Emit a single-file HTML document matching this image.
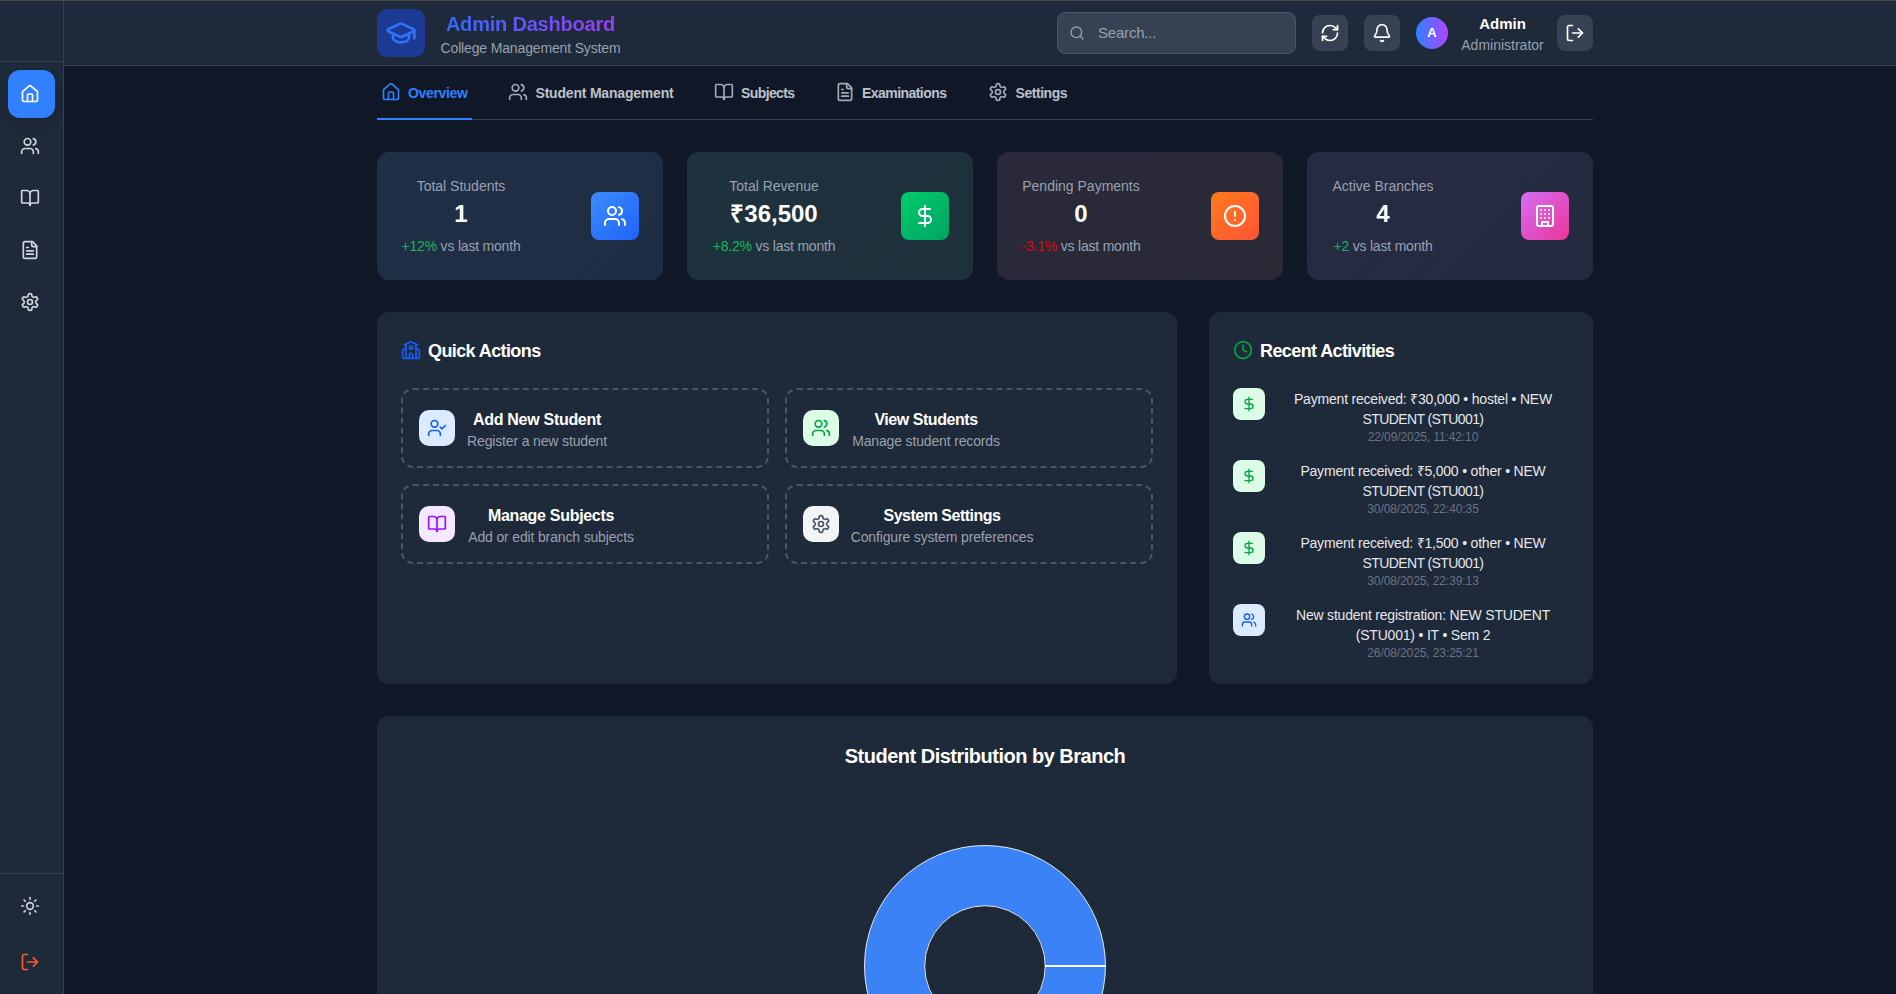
<!DOCTYPE html>
<html><head><meta charset="utf-8">
<style>
*{box-sizing:border-box;margin:0;padding:0}
html,body{width:1896px;height:994px;overflow:hidden;background:#101828;font-family:"Liberation Sans",sans-serif;color:#fff}
.abs{position:absolute}
svg{display:block;fill:none;stroke:currentColor;stroke-width:2;stroke-linecap:round;stroke-linejoin:round}
#topline{left:0;top:0;width:1896px;height:1px;background:#4a4b48;z-index:50}
#sidebar{left:0;top:0;width:64px;height:994px;background:#1e2939;border-right:1px solid #364153}
#sbtop{left:0;top:0;width:63px;height:62px;border-bottom:1px solid #364153}
#sbbot{left:0;top:873px;width:63px;height:1px;background:#364153}
.sbi{left:20px;color:#d1d5dc}
#sbactive{left:8px;top:70px;width:47px;height:48px;border-radius:12px;background:#3080ff;box-shadow:0 6px 10px rgba(0,0,0,.12)}
#header{left:64px;top:0;width:1832px;height:66px;background:#1e2939;border-bottom:1px solid #364153}
#logo{left:377px;top:9px;width:48px;height:48px;border-radius:10px;background:#1c3a93}
#title{left:441px;top:10px;width:179px;text-align:center}
#title .t1{font-size:20px;font-weight:700;line-height:28px;background:linear-gradient(90deg,#2f6bff,#9d3cf5);-webkit-background-clip:text;background-clip:text;color:transparent;letter-spacing:-0.2px}
#title .t2{font-size:14px;line-height:20px;color:#99a1af;letter-spacing:-0.15px;white-space:nowrap;margin-left:-3px;margin-right:-3px}
#search{left:1057px;top:12px;width:239px;height:42px;border-radius:8px;background:#364153;border:1px solid #4a5565}
#search .ph{position:absolute;left:40px;top:11px;font-size:15px;line-height:18px;color:#99a1af;letter-spacing:-0.2px}
.hbtn{top:15px;width:36px;height:36px;border-radius:8px;background:#364153;color:#fff}
.hbtn svg{position:absolute;left:8px;top:8px}
#avatar{left:1416px;top:17px;width:32px;height:32px;border-radius:50%;background:linear-gradient(90deg,#3080ff,#ad46ff);font-size:13px;font-weight:700;text-align:center;line-height:32px}
#uname{left:1455px;top:12px;width:95px;text-align:center}
#uname .n{font-size:15px;font-weight:700;line-height:20px;margin-top:1.5px}
#uname .r{font-size:14px;line-height:20px;color:#99a1af;margin-top:1.5px}
#tabs{left:377px;top:66px;width:1216px;height:54px;border-bottom:1px solid #364153}
.tab{top:15px;height:20px;font-size:14px;font-weight:700;line-height:20px;color:#bcc1ca;white-space:nowrap}
.tab span{top:1.5px!important}
.tab svg{position:absolute;left:0;top:1px;color:#a3a9b5}
.tab:first-child svg{color:#3080ff}
.tab span{position:absolute;top:0}
#ul{left:0;top:52px;width:95px;height:2px;background:#3080ff}
.card{top:152px;width:286px;height:128px;border-radius:12px}
.card .lbl{position:absolute;text-align:center;white-space:nowrap}
.card .l1{font-size:14px;line-height:20px;color:#99a1af}
.card .l2{font-size:24px;font-weight:700;line-height:32px;color:#fff}
.card .l3{font-size:14px;line-height:20px;color:#99a1af;letter-spacing:-0.2px}
.card .ic{position:absolute;left:214px;top:40px;width:48px;height:48px;border-radius:8px;color:#fff}
.card .ic svg{position:absolute;left:12px;top:12px}
.panel{background:#1e2939;border-radius:12px}
.ptitle{font-size:18px;font-weight:700;line-height:28px;letter-spacing:-0.6px;white-space:nowrap}
.qa{width:368px;height:80px;border:2px dashed #4a5565;border-radius:12px}
.qa .qi{position:absolute;left:16px;top:20px;width:36px;height:36px;border-radius:10px}
.qa .qi svg{position:absolute;left:8px;top:8px}
.qa .qt{position:absolute;top:19px;text-align:center;white-space:nowrap}
.qa .a{font-size:16px;font-weight:700;line-height:22px;letter-spacing:-0.3px}
.qa .b{font-size:14px;line-height:20px;color:#99a1af;letter-spacing:-0.15px}
.act{left:24px;width:336px;height:72px}
.act .ai{position:absolute;left:0;top:0;width:32px;height:32px;border-radius:8px}
.act .ai svg{position:absolute;left:8px;top:8px}
.act .at{position:absolute;left:44px;width:292px;top:1px;text-align:center;white-space:nowrap}
.act .m{font-size:14px;line-height:20px;color:#e5e7eb;letter-spacing:-0.2px}
.act .d{font-size:12px;line-height:16px;color:#6a7282;letter-spacing:-0.1px}
</style></head><body>
<div id="topline" class="abs"></div>
<!-- SIDEBAR -->
<div id="sidebar" class="abs"></div>
<div id="sbtop" class="abs"></div>
<div id="sbbot" class="abs"></div>
<div id="sbactive" class="abs"><svg class="abs" style="left:11.5px;top:13.5px" width="20" height="20" viewBox="0 0 24 24" stroke="#fff"><path d="M15 21v-8a1 1 0 0 0-1-1h-4a1 1 0 0 0-1 1v8"/><path d="M3 10a2 2 0 0 1 .709-1.528l7-5.999a2 2 0 0 1 2.582 0l7 5.999A2 2 0 0 1 21 10v9a2 2 0 0 1-2 2H5a2 2 0 0 1-2-2z"/></svg></div>
<svg class="abs sbi" style="top:136px" width="20" height="20" viewBox="0 0 24 24"><path d="M16 21v-2a4 4 0 0 0-4-4H6a4 4 0 0 0-4 4v2"/><path d="M16 3.128a4 4 0 0 1 0 7.744"/><path d="M22 21v-2a4 4 0 0 0-3-3.87"/><circle cx="9" cy="7" r="4"/></svg>
<svg class="abs sbi" style="top:188px" width="20" height="20" viewBox="0 0 24 24"><path d="M12 7v14"/><path d="M3 18a1 1 0 0 1-1-1V4a1 1 0 0 1 1-1h5a4 4 0 0 1 4 4 4 4 0 0 1 4-4h5a1 1 0 0 1 1 1v13a1 1 0 0 1-1 1h-6a3 3 0 0 0-3 3 3 3 0 0 0-3-3z"/></svg>
<svg class="abs sbi" style="top:240px" width="20" height="20" viewBox="0 0 24 24"><path d="M15 2H6a2 2 0 0 0-2 2v16a2 2 0 0 0 2 2h12a2 2 0 0 0 2-2V7Z"/><path d="M14 2v4a2 2 0 0 0 2 2h4"/><path d="M10 9H8"/><path d="M16 13H8"/><path d="M16 17H8"/></svg>
<svg class="abs sbi" style="top:292px" width="20" height="20" viewBox="0 0 24 24"><path d="M12.22 2h-.44a2 2 0 0 0-2 2v.18a2 2 0 0 1-1 1.73l-.43.25a2 2 0 0 1-2 0l-.15-.08a2 2 0 0 0-2.73.73l-.22.38a2 2 0 0 0 .73 2.73l.15.1a2 2 0 0 1 1 1.72v.51a2 2 0 0 1-1 1.74l-.15.09a2 2 0 0 0-.73 2.730l.22.38a2 2 0 0 0 2.73.73l.15-.08a2 2 0 0 1 2 0l.43.25a2 2 0 0 1 1 1.73V20a2 2 0 0 0 2 2h.44a2 2 0 0 0 2-2v-.18a2 2 0 0 1 1-1.73l.43-.25a2 2 0 0 1 2 0l.15.08a2 2 0 0 0 2.73-.73l.22-.39a2 2 0 0 0-.73-2.73l-.15-.08a2 2 0 0 1-1-1.74v-.5a2 2 0 0 1 1-1.74l.15-.09a2 2 0 0 0 .73-2.73l-.22-.38a2 2 0 0 0-2.73-.73l-.15.08a2 2 0 0 1-2 0l-.43-.25a2 2 0 0 1-1-1.73V4a2 2 0 0 0-2-2z"/><circle cx="12" cy="12" r="3"/></svg>
<svg class="abs sbi" style="top:896px" width="20" height="20" viewBox="0 0 24 24"><circle cx="12" cy="12" r="4"/><path d="M12 2v2"/><path d="M12 20v2"/><path d="m4.93 4.93 1.41 1.41"/><path d="m17.66 17.66 1.41 1.41"/><path d="M2 12h2"/><path d="M20 12h2"/><path d="m6.34 17.66-1.41 1.41"/><path d="m19.07 4.93-1.41 1.41"/></svg>
<svg class="abs sbi" style="top:952px;color:#ff5a2e" width="20" height="20" viewBox="0 0 24 24"><path d="M9 21H5a2 2 0 0 1-2-2V5a2 2 0 0 1 2-2h4"/><path d="m16 17 5-5-5-5"/><path d="M21 12H9"/></svg>

<!-- HEADER -->
<div id="header" class="abs"></div>
<div id="logo" class="abs"><svg class="abs" style="left:8px;top:8px;color:#2f74ff" width="32" height="32" viewBox="0 0 24 24"><path d="M21.42 10.922a1 1 0 0 0-.019-1.838L12.83 5.18a2 2 0 0 0-1.66 0L2.6 9.08a1 1 0 0 0 0 1.832l8.57 3.908a2 2 0 0 0 1.66 0z"/><path d="M22 10v6"/><path d="M6 12.5V16a6 3 0 0 0 12 0v-3.5"/></svg></div>
<div id="title" class="abs"><div class="t1">Admin Dashboard</div><div class="t2">College Management System</div></div>
<div id="search" class="abs"><svg class="abs" style="left:11px;top:12px;color:#99a1af" width="16" height="16" viewBox="0 0 24 24"><circle cx="11" cy="11" r="8"/><path d="m21 21-4.3-4.3"/></svg><div class="ph">Search...</div></div>
<div class="abs hbtn" style="left:1312px"><svg width="20" height="20" viewBox="0 0 24 24"><path d="M3 12a9 9 0 0 1 9-9 9.75 9.75 0 0 1 6.74 2.74L21 8"/><path d="M21 3v5h-5"/><path d="M21 12a9 9 0 0 1-9 9 9.75 9.75 0 0 1-6.74-2.74L3 16"/><path d="M8 16H3v5"/></svg></div>
<div class="abs hbtn" style="left:1364px"><svg width="20" height="20" viewBox="0 0 24 24"><path d="M10.268 21a2 2 0 0 0 3.464 0"/><path d="M3.262 15.326A1 1 0 0 0 4 17h16a1 1 0 0 0 .74-1.673C19.41 13.956 18 12.499 18 8A6 6 0 0 0 6 8c0 4.499-1.411 5.956-2.738 7.326"/></svg></div>
<div id="avatar" class="abs">A</div>
<div id="uname" class="abs"><div class="n">Admin</div><div class="r">Administrator</div></div>
<div class="abs hbtn" style="left:1557px"><svg width="20" height="20" viewBox="0 0 24 24"><path d="M9 21H5a2 2 0 0 1-2-2V5a2 2 0 0 1 2-2h4"/><path d="m16 17 5-5-5-5"/><path d="M21 12H9"/></svg></div>

<!-- TABS -->
<div id="tabs" class="abs">
  <div class="abs tab" style="left:4px;width:91px;color:#3080ff"><svg width="20" height="20" viewBox="0 0 24 24"><path d="M15 21v-8a1 1 0 0 0-1-1h-4a1 1 0 0 0-1 1v8"/><path d="M3 10a2 2 0 0 1 .709-1.528l7-5.999a2 2 0 0 1 2.582 0l7 5.999A2 2 0 0 1 21 10v9a2 2 0 0 1-2 2H5a2 2 0 0 1-2-2z"/></svg><span style="left:27px;letter-spacing:-0.35px">Overview</span></div>
  <div class="abs tab" style="left:130.5px;width:170px"><svg width="20" height="20" viewBox="0 0 24 24"><path d="M16 21v-2a4 4 0 0 0-4-4H6a4 4 0 0 0-4 4v2"/><path d="M16 3.128a4 4 0 0 1 0 7.744"/><path d="M22 21v-2a4 4 0 0 0-3-3.87"/><circle cx="9" cy="7" r="4"/></svg><span style="left:28px;letter-spacing:-0.2px">Student Management</span></div>
  <div class="abs tab" style="left:336.5px;width:90px"><svg width="20" height="20" viewBox="0 0 24 24"><path d="M12 7v14"/><path d="M3 18a1 1 0 0 1-1-1V4a1 1 0 0 1 1-1h5a4 4 0 0 1 4 4 4 4 0 0 1 4-4h5a1 1 0 0 1 1 1v13a1 1 0 0 1-1 1h-6a3 3 0 0 0-3 3 3 3 0 0 0-3-3z"/></svg><span style="left:27.5px;letter-spacing:-0.6px">Subjects</span></div>
  <div class="abs tab" style="left:457.5px;width:120px"><svg width="20" height="20" viewBox="0 0 24 24"><path d="M15 2H6a2 2 0 0 0-2 2v16a2 2 0 0 0 2 2h12a2 2 0 0 0 2-2V7Z"/><path d="M14 2v4a2 2 0 0 0 2 2h4"/><path d="M10 9H8"/><path d="M16 13H8"/><path d="M16 17H8"/></svg><span style="left:27.5px;letter-spacing:-0.55px">Examinations</span></div>
  <div class="abs tab" style="left:610.5px;width:90px"><svg width="20" height="20" viewBox="0 0 24 24"><path d="M12.22 2h-.44a2 2 0 0 0-2 2v.18a2 2 0 0 1-1 1.73l-.43.25a2 2 0 0 1-2 0l-.15-.08a2 2 0 0 0-2.73.73l-.22.38a2 2 0 0 0 .73 2.73l.15.1a2 2 0 0 1 1 1.72v.51a2 2 0 0 1-1 1.74l-.15.09a2 2 0 0 0-.73 2.73l.22.38a2 2 0 0 0 2.73.73l.15-.08a2 2 0 0 1 2 0l.43.25a2 2 0 0 1 1 1.73V20a2 2 0 0 0 2 2h.44a2 2 0 0 0 2-2v-.18a2 2 0 0 1 1-1.73l.43-.25a2 2 0 0 1 2 0l.15.08a2 2 0 0 0 2.73-.73l.22-.39a2 2 0 0 0-.73-2.73l-.15-.08a2 2 0 0 1-1-1.74v-.5a2 2 0 0 1 1-1.74l.15-.09a2 2 0 0 0 .73-2.73l-.22-.38a2 2 0 0 0-2.73-.73l-.15.08a2 2 0 0 1-2 0l-.43-.25a2 2 0 0 1-1-1.73V4a2 2 0 0 0-2-2z"/><circle cx="12" cy="12" r="3"/></svg><span style="left:28px;letter-spacing:-0.45px">Settings</span></div>
  <div id="ul" class="abs"></div>
</div>

<!-- STAT CARDS -->
<div class="abs card" style="left:377px;background:linear-gradient(135deg,#202e46,#1f2d44)">
  <div class="lbl l1" style="left:-16px;width:200px;top:24px">Total Students</div>
  <div class="lbl l2" style="left:-16px;width:200px;top:46px">1</div>
  <div class="lbl l3" style="left:-16px;width:200px;top:84px"><span style="color:#13b957">+12%</span> vs last month</div>
  <div class="ic" style="background:linear-gradient(135deg,#3c8cff,#1f63fb)"><svg width="24" height="24" viewBox="0 0 24 24"><path d="M16 21v-2a4 4 0 0 0-4-4H6a4 4 0 0 0-4 4v2"/><path d="M16 3.128a4 4 0 0 1 0 7.744"/><path d="M22 21v-2a4 4 0 0 0-3-3.87"/><circle cx="9" cy="7" r="4"/></svg></div>
</div>
<div class="abs card" style="left:687px;background:linear-gradient(135deg,#1e333e,#1e303a)">
  <div class="lbl l1" style="left:-13px;width:200px;top:24px">Total Revenue</div>
  <div class="lbl l2" style="left:-13px;width:200px;top:46px">₹36,500</div>
  <div class="lbl l3" style="left:-13px;width:200px;top:84px"><span style="color:#13b957">+8.2%</span> vs last month</div>
  <div class="ic" style="background:linear-gradient(135deg,#00cc6c,#00a462)"><svg width="24" height="24" viewBox="0 0 24 24"><path d="M12 2v20"/><path d="M17 5H9.5a3.5 3.5 0 0 0 0 7h5a3.5 3.5 0 0 1 0 7H6"/></svg></div>
</div>
<div class="abs card" style="left:997px;background:linear-gradient(135deg,#29293a,#292a36)">
  <div class="lbl l1" style="left:-16px;width:200px;top:24px">Pending Payments</div>
  <div class="lbl l2" style="left:-16px;width:200px;top:46px">0</div>
  <div class="lbl l3" style="left:-16px;width:200px;top:84px"><span style="color:#e7000b">-3.1%</span> vs last month</div>
  <div class="ic" style="background:linear-gradient(135deg,#ff7a1c,#fd5436)"><svg width="24" height="24" viewBox="0 0 24 24"><circle cx="12" cy="12" r="10"/><path d="M12 8v4"/><path d="M12 16h.01"/></svg></div>
</div>
<div class="abs card" style="left:1307px;background:linear-gradient(135deg,#262b44,#242a3f)">
  <div class="lbl l1" style="left:-24px;width:200px;top:24px">Active Branches</div>
  <div class="lbl l2" style="left:-24px;width:200px;top:46px">4</div>
  <div class="lbl l3" style="left:-24px;width:200px;top:84px"><span style="color:#13b957">+2</span> vs last month</div>
  <div class="ic" style="background:linear-gradient(135deg,#d56ef8,#ea3597)"><svg width="24" height="24" viewBox="0 0 24 24"><rect width="16" height="20" x="4" y="2" rx="2" ry="2"/><path d="M9 22v-4h6v4"/><path d="M8 6h.01"/><path d="M16 6h.01"/><path d="M12 6h.01"/><path d="M12 10h.01"/><path d="M12 14h.01"/><path d="M16 10h.01"/><path d="M16 14h.01"/><path d="M8 10h.01"/><path d="M8 14h.01"/></svg></div>
</div>


<!-- PANELS -->
<div class="abs panel" style="left:377px;top:312px;width:800px;height:372px">
  <svg class="abs" style="left:24px;top:28px;color:#155dfc" width="20" height="20" viewBox="0 0 24 24"><path d="M14 22v-4a2 2 0 1 0-4 0v4"/><path d="m18 10 3.447 1.724a1 1 0 0 1 .553.894V20a2 2 0 0 1-2 2H4a2 2 0 0 1-2-2v-7.382a1 1 0 0 1 .553-.894L6 10"/><path d="M18 5v17"/><path d="m4 6 7.106-3.553a2 2 0 0 1 1.788 0L20 6"/><path d="M6 5v17"/><circle cx="12" cy="9" r="2"/></svg>
  <div class="abs ptitle" style="left:51px;top:25px">Quick Actions</div>
  <div class="abs qa" style="left:24px;top:76px">
    <div class="qi" style="background:#dbeafe;color:#155dfc"><svg width="20" height="20" viewBox="0 0 24 24"><path d="M16 21v-2a4 4 0 0 0-4-4H6a4 4 0 0 0-4 4v2"/><circle cx="9" cy="7" r="4"/><path d="m16 11 2 2 4-4"/></svg></div>
    <div class="qt" style="left:34px;width:200px"><div class="a">Add New Student</div><div class="b">Register a new student</div></div>
  </div>
  <div class="abs qa" style="left:408px;top:76px">
    <div class="qi" style="background:#dcfce7;color:#00a63e"><svg width="20" height="20" viewBox="0 0 24 24"><path d="M16 21v-2a4 4 0 0 0-4-4H6a4 4 0 0 0-4 4v2"/><path d="M16 3.128a4 4 0 0 1 0 7.744"/><path d="M22 21v-2a4 4 0 0 0-3-3.87"/><circle cx="9" cy="7" r="4"/></svg></div>
    <div class="qt" style="left:39px;width:200px"><div class="a" style="letter-spacing:-0.45px">View Students</div><div class="b">Manage student records</div></div>
  </div>
  <div class="abs qa" style="left:24px;top:172px">
    <div class="qi" style="background:#f3e8ff;color:#9810fa"><svg width="20" height="20" viewBox="0 0 24 24"><path d="M12 7v14"/><path d="M3 18a1 1 0 0 1-1-1V4a1 1 0 0 1 1-1h5a4 4 0 0 1 4 4 4 4 0 0 1 4-4h5a1 1 0 0 1 1 1v13a1 1 0 0 1-1 1h-6a3 3 0 0 0-3 3 3 3 0 0 0-3-3z"/></svg></div>
    <div class="qt" style="left:48px;width:200px"><div class="a">Manage Subjects</div><div class="b">Add or edit branch subjects</div></div>
  </div>
  <div class="abs qa" style="left:408px;top:172px">
    <div class="qi" style="background:#f3f4f6;color:#4a5565"><svg width="20" height="20" viewBox="0 0 24 24"><path d="M12.22 2h-.44a2 2 0 0 0-2 2v.18a2 2 0 0 1-1 1.73l-.43.25a2 2 0 0 1-2 0l-.15-.08a2 2 0 0 0-2.73.73l-.22.38a2 2 0 0 0 .73 2.73l.15.1a2 2 0 0 1 1 1.72v.51a2 2 0 0 1-1 1.74l-.15.09a2 2 0 0 0-.73 2.73l.22.38a2 2 0 0 0 2.73.73l.15-.08a2 2 0 0 1 2 0l.43.25a2 2 0 0 1 1 1.73V20a2 2 0 0 0 2 2h.44a2 2 0 0 0 2-2v-.18a2 2 0 0 1 1-1.73l.43-.25a2 2 0 0 1 2 0l.15.08a2 2 0 0 0 2.73-.73l.22-.39a2 2 0 0 0-.73-2.73l-.15-.08a2 2 0 0 1-1-1.74v-.5a2 2 0 0 1 1-1.74l.15-.09a2 2 0 0 0 .73-2.73l-.22-.38a2 2 0 0 0-2.73-.73l-.15.08a2 2 0 0 1-2 0l-.43-.25a2 2 0 0 1-1-1.73V4a2 2 0 0 0-2-2z"/><circle cx="12" cy="12" r="3"/></svg></div>
    <div class="qt" style="left:55px;width:200px"><div class="a" style="letter-spacing:-0.5px">System Settings</div><div class="b">Configure system preferences</div></div>
  </div>
</div>

<div class="abs panel" style="left:1209px;top:312px;width:384px;height:372px">
  <svg class="abs" style="left:24px;top:28px;color:#00a63e" width="20" height="20" viewBox="0 0 24 24"><circle cx="12" cy="12" r="10"/><path d="M12 6v6l4 2"/></svg>
  <div class="abs ptitle" style="left:51px;top:25px">Recent Activities</div>
  <div class="abs act" style="top:76px">
    <div class="ai" style="background:#dcfce7;color:#00a63e"><svg width="16" height="16" viewBox="0 0 24 24"><path d="M12 2v20"/><path d="M17 5H9.5a3.5 3.5 0 0 0 0 7h5a3.5 3.5 0 0 1 0 7H6"/></svg></div>
    <div class="at"><div class="m">Payment received: ₹30,000 • hostel • NEW</div><div class="m" style="letter-spacing:-0.6px">STUDENT (STU001)</div><div class="d">22/09/2025, 11:42:10</div></div>
  </div>
  <div class="abs act" style="top:148px">
    <div class="ai" style="background:#dcfce7;color:#00a63e"><svg width="16" height="16" viewBox="0 0 24 24"><path d="M12 2v20"/><path d="M17 5H9.5a3.5 3.5 0 0 0 0 7h5a3.5 3.5 0 0 1 0 7H6"/></svg></div>
    <div class="at"><div class="m">Payment received: ₹5,000 • other • NEW</div><div class="m" style="letter-spacing:-0.6px">STUDENT (STU001)</div><div class="d">30/08/2025, 22:40:35</div></div>
  </div>
  <div class="abs act" style="top:220px">
    <div class="ai" style="background:#dcfce7;color:#00a63e"><svg width="16" height="16" viewBox="0 0 24 24"><path d="M12 2v20"/><path d="M17 5H9.5a3.5 3.5 0 0 0 0 7h5a3.5 3.5 0 0 1 0 7H6"/></svg></div>
    <div class="at"><div class="m">Payment received: ₹1,500 • other • NEW</div><div class="m" style="letter-spacing:-0.6px">STUDENT (STU001)</div><div class="d">30/08/2025, 22:39:13</div></div>
  </div>
  <div class="abs act" style="top:292px">
    <div class="ai" style="background:#dbeafe;color:#155dfc"><svg width="16" height="16" viewBox="0 0 24 24"><path d="M16 21v-2a4 4 0 0 0-4-4H6a4 4 0 0 0-4 4v2"/><path d="M16 3.128a4 4 0 0 1 0 7.744"/><path d="M22 21v-2a4 4 0 0 0-3-3.87"/><circle cx="9" cy="7" r="4"/></svg></div>
    <div class="at"><div class="m">New student registration: NEW STUDENT</div><div class="m">(STU001) • IT • Sem 2</div><div class="d">26/08/2025, 23:25:21</div></div>
  </div>
</div>

<div class="abs panel" style="left:377px;top:716px;width:1216px;height:400px">
  <div class="abs ptitle" style="left:308px;width:600px;top:25.5px;text-align:center;font-size:20px;letter-spacing:-0.5px">Student Distribution by Branch</div>
  <svg class="abs" style="left:487px;top:129px;stroke:none" width="242" height="242" viewBox="0 0 242 242">
    <circle cx="121" cy="121" r="90.4" fill="none" stroke="#3b82f6" stroke-width="60.2"/>
    <circle cx="121" cy="121" r="120.5" fill="none" stroke="#e5e7eb" stroke-width="1" style="stroke-width:1"/>
    <circle cx="121" cy="121" r="60.3" fill="none" stroke="#e5e7eb" stroke-width="1" style="stroke-width:1"/>
    <path d="M181.3 121H241.5" stroke="#ffffff" style="stroke-width:2;stroke-linecap:butt"/>
  </svg>
</div>

</body></html>
